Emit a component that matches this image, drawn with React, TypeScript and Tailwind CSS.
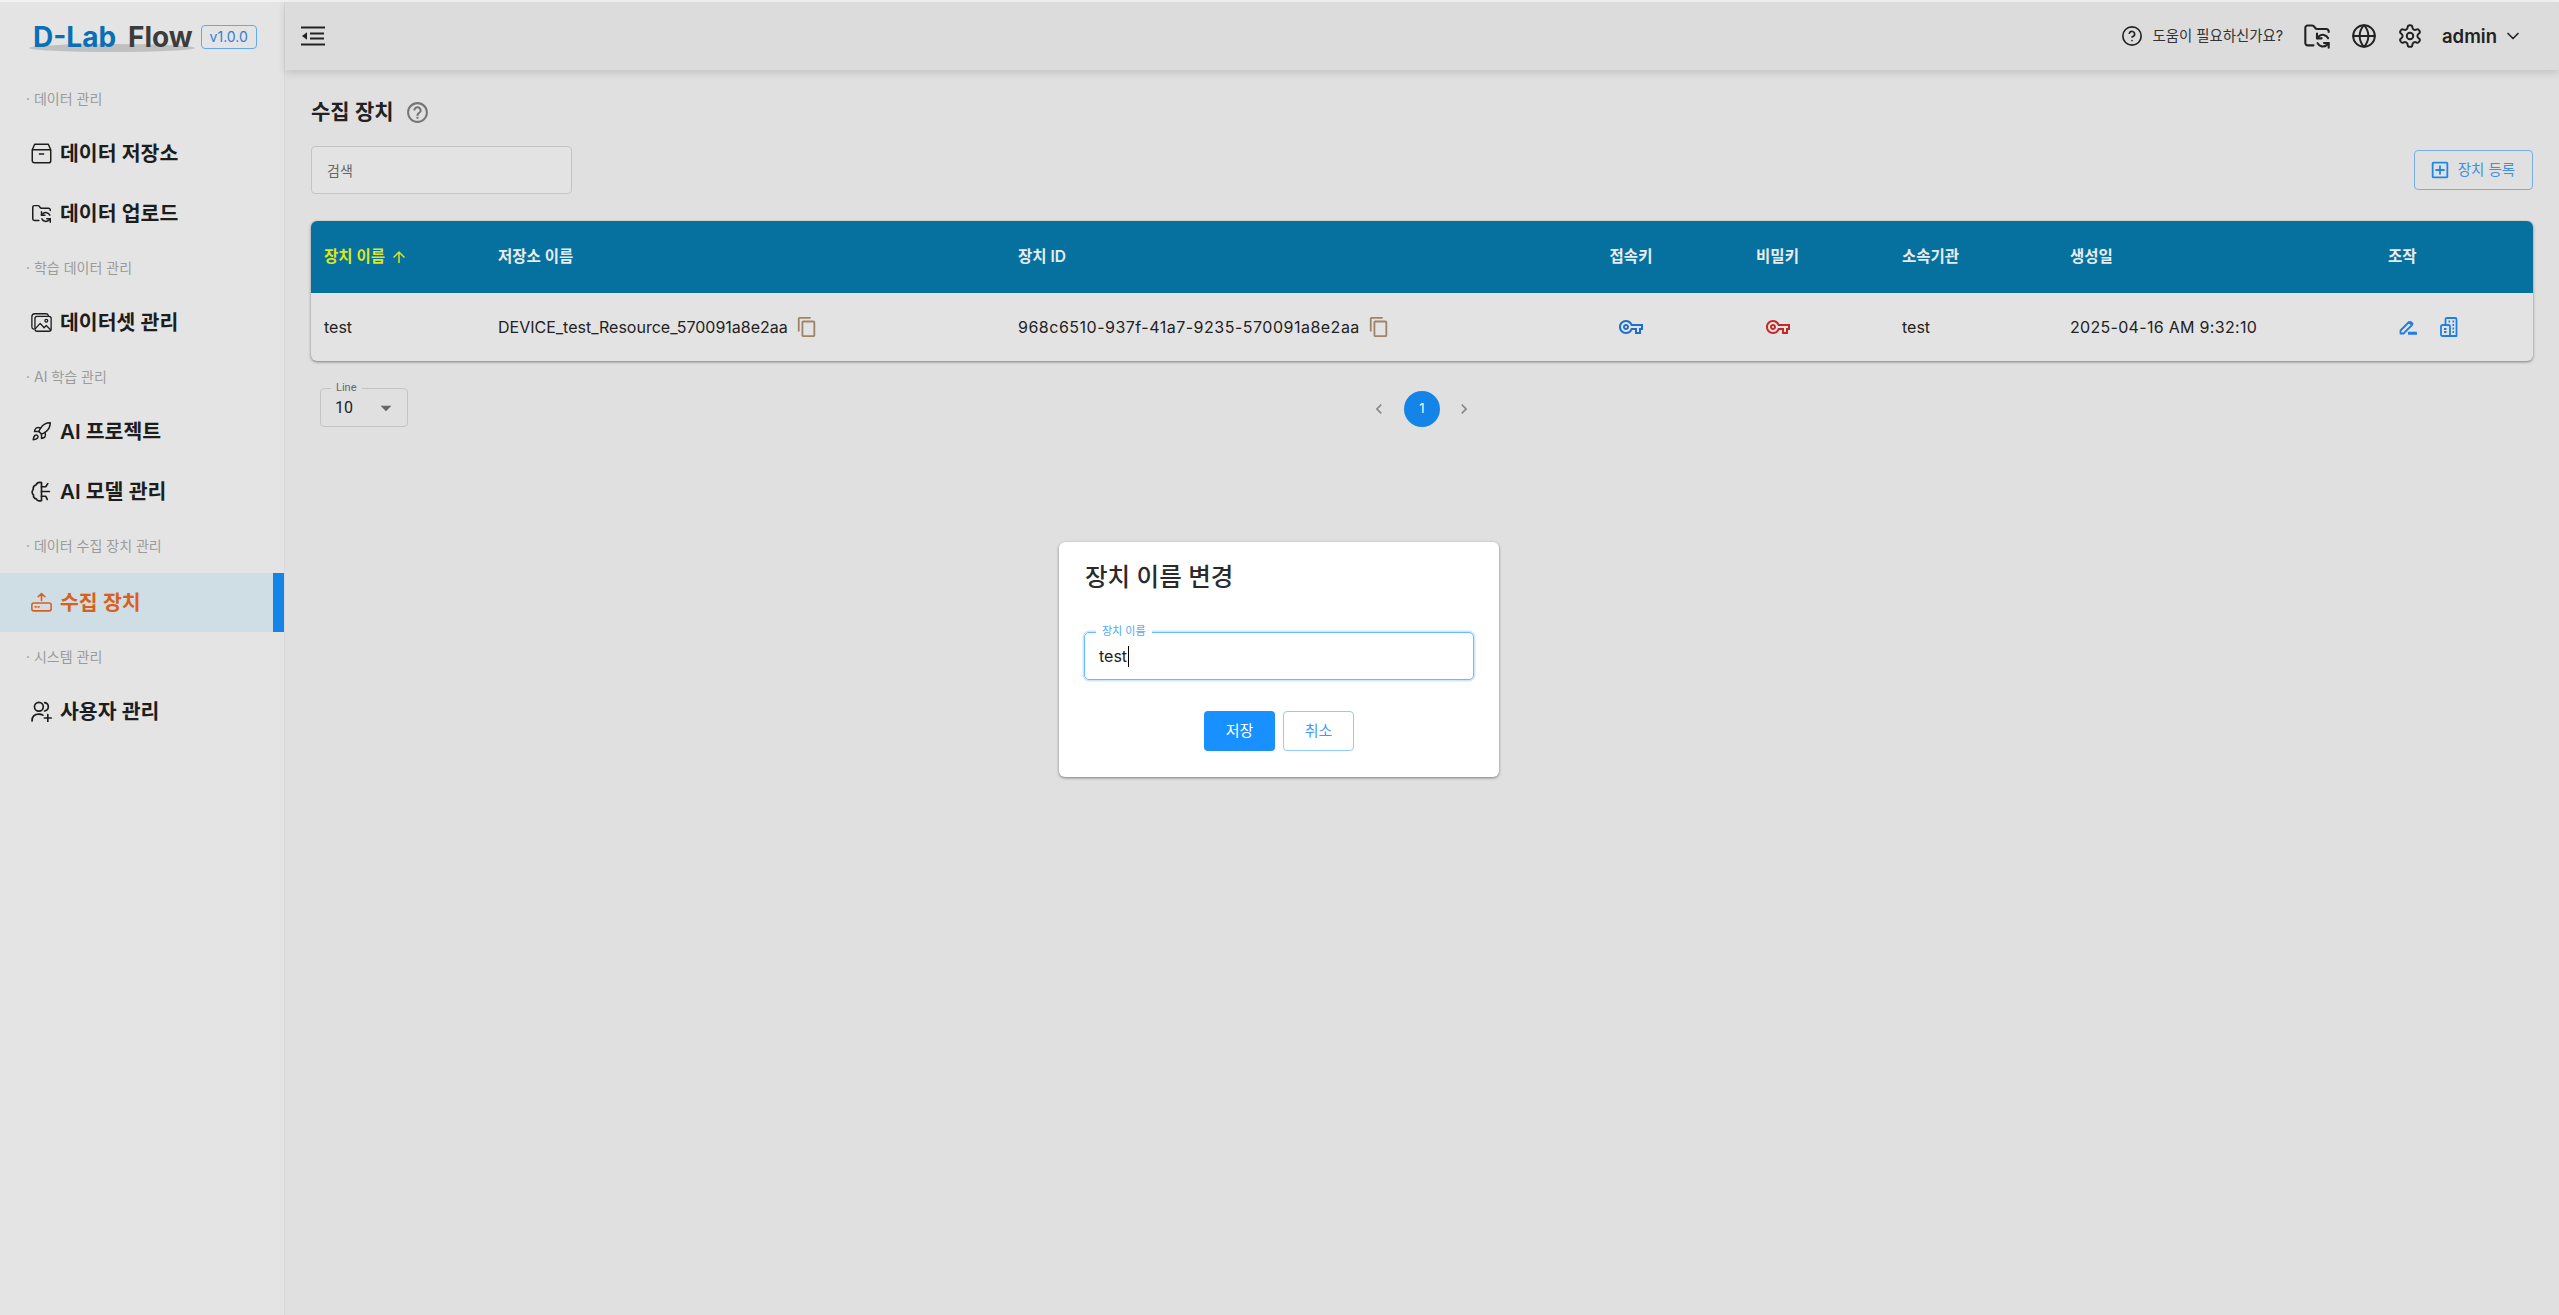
import React from "react";
import { MdContentCopy, MdOutlineVpnKey, MdOutlineAddBox, MdArrowUpward, MdArrowDropDown, MdChevronLeft, MdChevronRight, MdHelpOutline } from "react-icons/md";
import { LuFolderSync, LuGlobe, LuSettings, LuChevronDown, LuRocket, LuCircleHelp } from "react-icons/lu";

const FONT = "font-['Inter','Noto_Sans_CJK_KR',sans-serif]";
const ROBOTO = "font-['Roboto','Noto_Sans_CJK_KR',sans-serif]";

function BoxIcon() {
  return (
    <svg width="21" height="21" viewBox="0 0 20 20" fill="none" stroke="currentColor" strokeWidth="1.4" strokeLinejoin="round">
      <path d="M1.200 6.500 3.500 1.200h13l2.300 5.300v10.300a2 2 0 0 1-2 2H3.200a2 2 0 0 1-2-2z" />
      <path d="M1.200 6.500h17.600M7.500 10.500h5" />
    </svg>
  );
}
function ImagesIcon() {
  return (
    <svg width="23" height="23" viewBox="0 0 24 24" fill="none" stroke="currentColor" strokeWidth="1.500" strokeLinecap="round" strokeLinejoin="round">
      <path d="M3 19.500c-1-.3-2-1-2-2.500V5.500C1 3.500 2.500 2 4.500 2H17c1.500 0 2.500.8 2.800 2" />
      <rect x="4.500" y="5" width="18.500" height="17" rx="2.500" />
      <path d="M5 19l5.500-6 4.500 5 2.500-2.500 5 5" />
      <circle cx="17.500" cy="10" r="1.600" />
    </svg>
  );
}
function BrainIcon() {
  return (
    <svg width="21" height="21" viewBox="0 0 20 20" fill="none" stroke="currentColor" strokeWidth="1.600" strokeLinecap="round" strokeLinejoin="round">
      <path d="M10 1.500v17c-2 1-4.200.3-5-1.500-1.800-.3-3-2-2.600-3.800C.8 12 .6 9.300 2.200 8 1.800 6 3 4.300 4.800 3.800 5.500 2 7.800 1 10 1.500z" />
      <path d="M10 5.500h4l2-3M10 10h7.500M10 14.500h4l1.500 3" />
    </svg>
  );
}
function DeviceIcon() {
  return (
    <svg width="21" height="21" viewBox="0 0 20 20" fill="none" stroke="currentColor" strokeWidth="1.500" strokeLinecap="round" strokeLinejoin="round">
      <rect x="0.800" y="10.500" width="18.400" height="7.500" rx="2" />
      <path d="M10 8V1.500M6.800 4.500 10 1.500l3.200 3" />
      <path d="M4 14.200h.8M6.800 14.200h.8" />
    </svg>
  );
}
function UserAddIcon() {
  return (
    <svg width="21" height="21" viewBox="0 0 20 20" fill="none" stroke="currentColor" strokeWidth="1.600" strokeLinecap="round" strokeLinejoin="round">
      <circle cx="7.500" cy="5.500" r="4.200" />
      <path d="M1 19c0-4 2.500-6.500 6.500-6.500 1.500 0 2.800.3 3.800 1" />
      <path d="M13 1.500c2.200.4 3.500 2 3.500 4s-1.300 3.500-3.500 4" />
      <path d="M16 13v6.500M12.800 16.200h6.400" />
    </svg>
  );
}
function IndentIcon() {
  return (
    <svg width="24" height="20" viewBox="0 0 24 20" fill="currentColor">
      <rect x="0" y="0.500" width="24" height="2" />
      <rect x="9" y="6.500" width="14" height="2" />
      <rect x="9" y="11.500" width="14" height="2" />
      <rect x="0" y="17.500" width="24" height="2" />
      <path d="M1 10l5-3.800v7.600z" />
    </svg>
  );
}
function PencilBarIcon() {
  return (
    <svg width="18" height="15" viewBox="0 0 18 15" fill="none">
      <path d="M1.500 13.500v-3L10 2l3 3-8.500 8.500z" stroke="currentColor" strokeWidth="1.800" strokeLinejoin="round" />
      <path d="M11.800.8l3 3-1.600 1.400-3-3z" fill="currentColor" />
      <rect x="9" y="11.800" width="9" height="3" rx="0.500" fill="currentColor" />
    </svg>
  );
}
function BuildingIcon() {
  return (
    <svg width="18" height="20" viewBox="0 0 18 20" fill="none" stroke="currentColor">
      <path d="M5.500 8V2.500C5.500 1.700 6.200 1 7 1h8c.8 0 1.500.7 1.500 1.500V19h-14C1.700 19 1 18.300 1 17.500V9.500C1 8.700 1.700 8 2.500 8h6c.8 0 1.500.7 1.500 1.500V19" strokeWidth="1.800" strokeLinejoin="round" />
      <path d="M8.500 4.500h1.600M12.500 4.500h1.600M12.500 8h1.600M12.500 11.500h1.600M12.500 15h1.600M4 12h2.500M4 15h2.500" strokeWidth="1.800" />
    </svg>
  );
}

function Section({ label }: { label: string }) {
  return <div className="h-[49px] flex items-center pl-[26px] pb-[1px] text-[14px] text-[#9b9b9b]">· {label}</div>;
}
function NavItem({ icon, label, active }: { icon: React.ReactNode; label: string; active?: boolean }) {
  return (
    <div className={active ? "relative mt-[3px] h-[59px] flex items-center gap-[8px] pl-[31px] bg-[#cfdde5] text-[#d9601c]" : "h-[60px] flex items-center gap-[8px] pl-[31px] text-[#1d1d1d]"}>
      <span className="w-[21px] flex justify-center">{icon}</span>
      <span className="pt-[2px] text-[20.500px] font-semibold leading-none">{label}</span>
      {active && <span className="absolute right-0 top-0 bottom-0 w-[11px] bg-[#1584e8]" />}
    </div>
  );
}

export default function App() {
  return (
    <div className={`relative h-[1315px] w-[2559px] overflow-hidden flex bg-[#e0e0e0] ${FONT}`}>
      <aside className="w-[285px] shrink-0 border-r border-[#d9d9d9] bg-[#e4e4e4] pt-[2px]">
        <div className="h-[72px] flex items-center pl-[33px] pb-[3px]">
          <div className="relative text-[28px] font-bold leading-none">
            <span className="absolute left-[-4px] right-[-2px] top-[21px] h-[8px] rounded-[50%] bg-[#c0c0c0]" />
            <span className="relative text-[#0a6fb5]">D-Lab</span>
            <span className="relative text-[#3c3c3c] ml-[12px]">Flow</span>
          </div>
          <span className="ml-[8px] h-[24px] w-[56px] rounded-[4px] border border-[#63a9f0] text-[14px] text-[#2f80d8] flex items-center justify-center">v1.0.0</span>
        </div>
        <Section label="데이터 관리" />
        <NavItem icon={<BoxIcon />} label="데이터 저장소" />
        <NavItem icon={<LuFolderSync size={23} strokeWidth={1.7} />} label="데이터 업로드" />
        <Section label="학습 데이터 관리" />
        <NavItem icon={<ImagesIcon />} label="데이터셋 관리" />
        <Section label="AI 학습 관리" />
        <NavItem icon={<LuRocket size={23} strokeWidth={1.7} />} label="AI 프로젝트" />
        <NavItem icon={<BrainIcon />} label="AI 모델 관리" />
        <Section label="데이터 수집 장치 관리" />
        <NavItem icon={<DeviceIcon />} label="수집 장치" active />
        <Section label="시스템 관리" />
        <NavItem icon={<UserAddIcon />} label="사용자 관리" />
      </aside>

      <main className="flex-1 min-w-0 flex flex-col">
        <div className="h-[2px] bg-[#f2f2f2] -ml-[285px]" />
        <header className="h-[68px] flex items-center bg-[#dcdcdc] shadow-[0_3px_8px_rgba(0,0,0,0.13)] pl-[16px] pr-[36px] text-[#222]">
          <IndentIcon />
          <div className="ml-auto flex items-center">
            <LuCircleHelp size={22} strokeWidth={1.800} />
            <span className="ml-[9px] text-[14.400px] text-[#333]">도움이 필요하신가요?</span>
            <LuFolderSync size={28} strokeWidth={1.800} className="ml-[20px]" />
            <LuGlobe size={26} strokeWidth={1.800} className="ml-[20px]" />
            <LuSettings size={26} strokeWidth={1.800} className="ml-[20px]" />
            <span className="ml-[19px] text-[18.500px] font-semibold leading-none">admin</span>
            <LuChevronDown size={20} strokeWidth={2} className="ml-[6px]" />
          </div>
        </header>

        <div className="pl-[26px] pr-[26px]">
          <div className="h-[76px] pt-[8px] flex items-center gap-[11px]">
            <h1 className="text-[21px] font-semibold text-[#222]">수집 장치</h1>
            <MdHelpOutline size={25} className="text-[#757575]" />
          </div>

          <div className="flex items-start justify-between">
            <div className="h-[48px] w-[261px] rounded-[4px] border border-[#c4c4c4] bg-[#e3e3e3] pl-[15px] flex items-center text-[14px] text-[#666]">검색</div>
            <button className="mt-[4px] h-[40px] w-[119px] rounded-[4px] border border-[#77aee6] pr-[3px] flex items-center justify-center gap-[7px] text-[14.500px] text-[#3d8fe0]">
              <MdOutlineAddBox size={22} className="text-[#1e88e5]" />
              장치 등록
            </button>
          </div>

          <div className="mt-[27px] rounded-[6px] bg-[#e3e3e3] shadow-[0_1px_3px_rgba(0,0,0,0.45)] overflow-hidden">
            <table className="w-full table-fixed text-left text-[16px] text-[#222]">
              <colgroup>
                <col className="w-[174px]" />
                <col className="w-[520px]" />
                <col className="w-[553px]" />
                <col className="w-[146px]" />
                <col className="w-[147px]" />
                <col className="w-[206px]" />
                <col className="w-[318px]" />
                <col />
              </colgroup>
              <thead>
                <tr className="h-[72px] bg-[#06719f] text-[#e6edf0] text-[15.500px]">
                  <th className="pl-[13px] font-semibold text-[#dfe61a]">
                    <span className="inline-flex items-center gap-[5px]">장치 이름 <MdArrowUpward size={18} /></span>
                  </th>
                  <th className="pl-[13px] font-semibold">저장소 이름</th>
                  <th className="pl-[13px] font-semibold">장치 ID</th>
                  <th className="text-center font-semibold">접속키</th>
                  <th className="text-center font-semibold">비밀키</th>
                  <th className="pl-[51px] font-semibold">소속기관</th>
                  <th className="pl-[13px] font-semibold">생성일</th>
                  <th className="pl-[13px] font-semibold">조작</th>
                </tr>
              </thead>
              <tbody>
                <tr className="h-[68px]">
                  <td className="pl-[13px]">test</td>
                  <td className="pl-[13px]">
                    <span className="inline-flex items-center gap-[8px]">DEVICE_test_Resource_570091a8e2aa <MdContentCopy size={22} className="text-[#a08468]" /></span>
                  </td>
                  <td className="pl-[13px]">
                    <span className="inline-flex items-center gap-[8px] tracking-[0.5px]">968c6510-937f-41a7-9235-570091a8e2aa <MdContentCopy size={22} className="text-[#a08468]" /></span>
                  </td>
                  <td><span className="flex justify-center"><MdOutlineVpnKey size={24} className="text-[#1e6fc8]" /></span></td>
                  <td><span className="flex justify-center"><MdOutlineVpnKey size={24} className="text-[#c62828]" /></span></td>
                  <td className="pl-[51px]">test</td>
                  <td className="pl-[13px] tracking-[0.3px]">2025-04-16 AM 9:32:10</td>
                  <td className="pl-[24px]">
                    <span className="flex items-center gap-[23px] text-[#1e7fe0]">
                      <PencilBarIcon />
                      <BuildingIcon />
                    </span>
                  </td>
                </tr>
              </tbody>
            </table>
          </div>

          <div className="relative mt-[27px]">
            <div className={`relative ml-[9px] h-[39px] w-[88px] rounded-[4px] border border-[#c4c4c4] flex items-center pl-[14px] text-[16px] text-[#222] ${ROBOTO}`}>
              10
              <MdArrowDropDown size={26} className="absolute right-[8px] text-[#666]" />
              <span className="absolute left-[10px] -top-[8px] bg-[#e0e0e0] px-[5px] text-[11px] leading-[14px] text-[#666]">Line</span>
            </div>
            <nav className="absolute top-[3px] left-[1058px] flex items-center gap-[15px] text-[#8a8a8a]">
              <MdChevronLeft size={20} />
              <span className="h-[36px] w-[36px] rounded-full bg-[#1584e8] text-white text-[13px] flex items-center justify-center">1</span>
              <MdChevronRight size={20} className="-ml-[1px]" />
            </nav>
          </div>
        </div>
      </main>

      <div className="absolute left-[1059px] top-[542px] h-[235px] w-[440px] rounded-[6px] bg-white shadow-[0_1px_3px_rgba(0,0,0,0.45)] px-[25px] pt-[17px]">
        <h2 className="ml-[1px] text-[24.500px] font-medium leading-[36px] text-[#2a2a2a]">장치 이름 변경</h2>
        <div className="relative mt-[37px] h-[48px] rounded-[5px] border-[1.500px] border-[#6bb9ff] ring-[1.500px] ring-[#cfe7ff] flex items-center pl-[14px] text-[16px] text-[#222]">
          <span>test</span>
          <span className="ml-[1px] h-[21px] w-[1px] bg-black" />
          <span className="absolute left-[11px] -top-[10px] bg-white px-[6px] text-[11px] leading-[16px] text-[#4da8ff]">장치 이름</span>
        </div>
        <div className="mt-[31px] flex justify-center gap-[8px] text-[15px]">
          <button className="h-[40px] w-[71px] rounded-[4px] bg-[#1890ff] text-white">저장</button>
          <button className="h-[40px] w-[71px] rounded-[4px] border border-[#91caff] text-[#3f9bff]">취소</button>
        </div>
      </div>
    </div>
  );
}
